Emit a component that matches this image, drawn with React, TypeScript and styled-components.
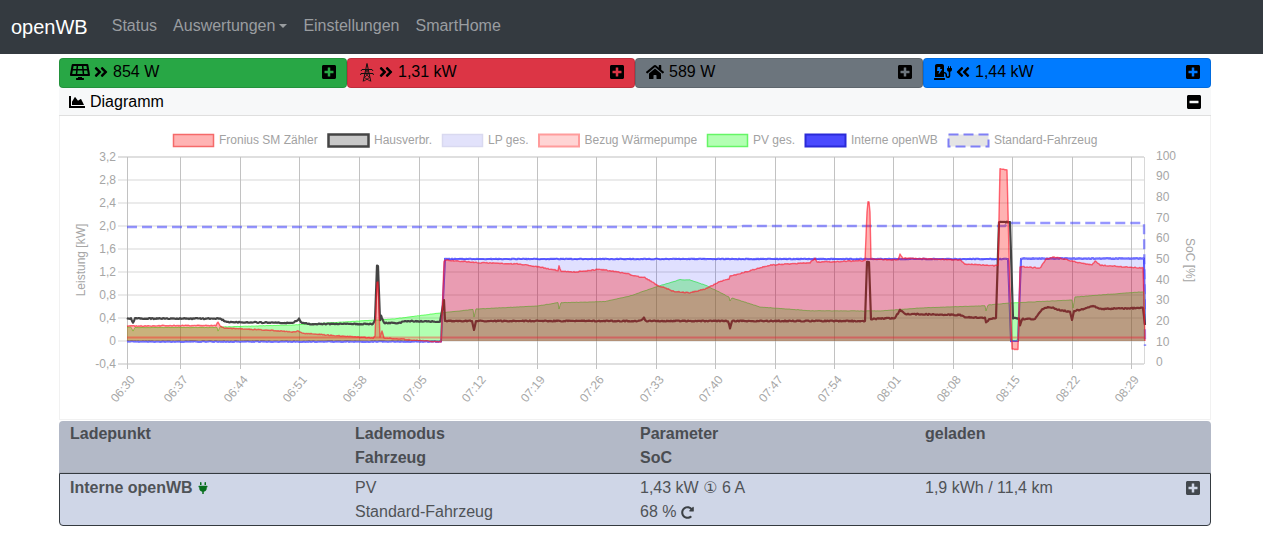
import { FC } from 'react';
import styled, { createGlobalStyle } from 'styled-components';
import {
  FaAngleDoubleLeft,
  FaAngleDoubleRight,
  FaChartArea,
  FaChargingStation,
  FaHome,
  FaMinusSquare,
  FaPlug,
  FaPlusSquare,
  FaRedoAlt,
  FaSolarPanel,
} from 'react-icons/fa';

const GlobalStyle = createGlobalStyle`
  html, body {
    margin: 0;
    background: #fff;
    font-family: "Liberation Sans", Arial, "DejaVu Sans", sans-serif;
    font-size: 16px;
    line-height: 24px;
  }
`;

const Navbar = styled.nav`
  display: flex;
  align-items: center;
  height: 54px;
  padding-left: 11px;
  background: #343a40;
`;

const Brand = styled.a`
  margin-right: 24px;
  font-size: 20px;
  color: #fff;
`;

const NavList = styled.ul`
  display: flex;
  gap: 16px;
  margin: 0 0 2px;
  padding: 0;
  list-style: none;
`;

const NavItem = styled.li`
  display: flex;
  align-items: center;
  color: #9a9da0;
`;

const Caret = styled.span`
  width: 0;
  height: 0;
  margin: 0 0 0 4px;
  border-top: 4.8px solid #9a9da0;
  border-left: 4.8px solid transparent;
  border-right: 4.8px solid transparent;
`;

const Main = styled.main`
  width: 1152px;
  margin: 4px 0 0 59px;
`;

const Tiles = styled.div`
  display: grid;
  grid-template-columns: repeat(4, 288px);
`;

const Tile = styled.div<{ $bg: string }>`
  display: flex;
  align-items: center;
  justify-content: space-between;
  box-sizing: border-box;
  height: 30px;
  padding: 0 9px 2px 10px;
  border: 1px solid rgba(0, 0, 0, 0.125);
  border-radius: 4px;
  background: ${(p) => p.$bg};
  color: #000;
`;

const TileValue = styled.span`
  display: flex;
  align-items: center;
  gap: 3px;
  svg {
    display: block;
  }
`;

const TileText = styled.span`
  margin-left: 1px;
`;

const HomeSlot = styled.span`
  display: flex;
  margin-right: 1px;
`;

const PylonSlot = styled.span`
  display: flex;
  margin: 0 1px 0 2px;
`;

const ToggleIcon = styled(FaPlusSquare)`
  display: block;
`;

const DiagramHeader = styled.div`
  display: flex;
  align-items: center;
  justify-content: space-between;
  box-sizing: border-box;
  height: 28px;
  padding: 0 9px 0 10px;
  border-bottom: 1px solid #dfdfdf;
  background: #f7f8f9;
  color: #000;
`;

const DiagramTitle = styled.span`
  display: flex;
  align-items: center;
  gap: 5px;
`;

const ChartBody = styled.div`
  height: 304px;
  box-sizing: border-box;
  border: 1px solid #f1f1f1;
  border-top: 0;
  svg {
    display: block;
  }
`;

const TableHead = styled.div`
  display: grid;
  grid-template-columns: repeat(3, 285px) 276px;
  align-content: start;
  box-sizing: border-box;
  height: 52px;
  margin-top: 1px;
  padding: 1px 0 0 11px;
  border-radius: 4px 4px 0 0;
  border-bottom: 1px solid #a9aebb;
  background: #b3b9c7;
  color: #4a4d52;
  font-weight: bold;
`;

const TableRow = styled.div`
  display: grid;
  grid-template-columns: repeat(3, 285px) 276px;
  align-content: start;
  box-sizing: border-box;
  height: 53px;
  padding: 2px 0 0 10px;
  border: 1px solid #343a40;
  border-radius: 0 0 4px 4px;
  background: #cfd6e7;
  color: #4f5357;
`;

const Cell = styled.div`
  height: 24px;
`;

const NameCell = styled(Cell)`
  display: flex;
  align-items: center;
  gap: 4px;
  font-weight: bold;
`;

const FlexCell = styled(Cell)`
  display: flex;
  align-items: center;
  justify-content: space-between;
`;

const RowToggle = styled(FaPlusSquare)`
  display: block;
  color: #43484e;
`;

const InlineIcon = styled.span`
  display: inline-flex;
  vertical-align: -2px;
  color: #3c4146;
`;

const PlugIcon = styled.span`
  display: inline-flex;
  color: #076f1d;
`;

const AxisText = styled.text`
  font-family: "Liberation Sans", Arial, sans-serif;
  font-size: 12px;
  fill: #a6a6a6;
`;

const LegendText = styled.text`
  font-family: "Liberation Sans", Arial, sans-serif;
  font-size: 12px;
  fill: #a2a2a2;
`;

// pixel keypoints of each trace, read off the plot
type Key = [number, number];

const BASE = 341;

const fronius: Key[] = [
  [127, 326], [132, 325.5], [133, 326], [175, 325.5], [216, 325.5], [218, 322], [220, 325.5], [224, 328], [267, 330], [293, 332],
  [298, 331], [302, 333], [327, 335], [350, 336.5], [373, 338], [375, 336], [377, 282], [378, 282], [380, 337], [382, 331], [384, 338],
  [400, 339], [427, 341], [441, 342], [444, 262], [445, 260], [478, 262.7], [520, 264], [540, 267], [558, 270.5], [559, 266], [561, 271],
  [575, 272], [600, 269.3], [625, 273], [640, 277], [644, 277], [657, 285], [675, 291.7], [690, 292.7], [705, 289], [720, 281.7], [729, 279],
  [730, 276], [735, 275], [770, 265], [810, 262.7], [815, 258], [817, 262], [834, 261.7], [865, 260.5], [867, 212], [868, 202], [869, 202], [870, 212], [871, 259],
  [898, 260], [900, 254], [903, 258], [960, 260], [965, 264], [995, 265.7], [998, 265], [1000, 168.3], [1007, 170], [1009, 252], [1012, 349.3],
  [1018, 349.3], [1020, 266.7], [1040, 268], [1046, 259], [1054, 257], [1060, 258], [1080, 263], [1092, 265], [1095, 261], [1100, 265],
  [1120, 266.7], [1143, 268], [1144, 300], [1145, 341],
];

const house: Key[] = [
  [127, 318.5], [131, 318.5], [133, 323], [135, 318.5], [220, 318.7], [227, 322], [293, 323], [299, 319], [302, 323], [310, 324], [373, 324],
  [375, 320], [377, 266], [378, 266], [380, 320], [381, 316], [384, 323], [400, 323], [403, 321], [440, 321.7], [444, 300], [445, 321],
  [472, 321], [474, 330], [476, 321], [640, 321], [644, 318], [646, 321], [728, 321], [730, 328], [732, 321], [865, 321], [867, 262],
  [869, 262], [871, 319], [895, 318], [900, 310], [905, 314], [960, 315], [965, 317], [985, 318], [986, 322], [990, 319], [996, 318],
  [999, 222], [1010, 222], [1013, 318], [1019, 319], [1020, 326], [1022, 319], [1035, 319], [1042, 309], [1050, 307], [1060, 310], [1070, 312],
  [1072, 320], [1074, 311], [1085, 309], [1093, 306], [1100, 309], [1143, 308], [1145, 325],
];

const lp: Key[] = [
  [127, 341.5], [441, 341.5], [445, 259], [1005, 259], [1008, 259], [1011, 341], [1018, 341], [1021, 258.5], [1144, 258.5], [1145, 325],
];

const heatPump: Key[] = [[127, 337.5], [1145, 337.5]];

const pv: Key[] = [
  [127, 327], [131, 327], [133, 331], [135, 327.5], [217, 327.5], [218, 331], [220, 327], [293, 325], [393, 319], [440, 313], [478, 309],
  [473, 309.5], [474, 317], [476, 309], [537, 306], [558, 302.7], [559, 309], [561, 302.7], [590, 302], [605, 301.5], [630, 296], [657, 286.6],
  [680, 279.7], [690, 280], [705, 285], [729, 297], [730, 301], [732, 298], [760, 307], [810, 310.7], [880, 311], [920, 308], [985, 305.7],
  [986, 311], [988, 305], [1010, 303], [1072, 300], [1073, 308], [1075, 297], [1100, 295], [1144, 291.7], [1145, 320],
];

const standard: Key[] = [
  [127, 227], [739, 227], [743, 226], [1005, 226], [1007, 223], [1144, 223], [1145, 346],
];

const wobble = (x: number, seed: number) => {
  const v = Math.sin(x * 12.9898 + seed * 78.233) * 43758.5453;
  return (v - Math.floor(v)) * 2 - 1;
};

const tracePoints = (keys: Key[], amp: number, seed: number) => {
  const sorted = [...keys].sort((a, b) => a[0] - b[0]);
  const pts: Key[] = [];
  for (let i = 0; i < sorted.length - 1; i++) {
    const [x0, y0] = sorted[i];
    const [x1, y1] = sorted[i + 1];
    const steep = Math.abs(y1 - y0) > 8 && x1 - x0 < 6;
    const steps = Math.max(1, Math.round(x1 - x0));
    for (let s = 0; s < steps; s++) {
      const x = x0 + ((x1 - x0) * s) / steps;
      const y = y0 + ((y1 - y0) * s) / steps;
      pts.push([x, y + (steep ? 0 : wobble(x, seed) * amp)]);
    }
  }
  pts.push(sorted[sorted.length - 1]);
  return pts;
};

const linePath = (pts: Key[]) => pts.map(([x, y], i) => `${i ? 'L' : 'M'}${x.toFixed(1)} ${y.toFixed(1)}`).join('');

const areaPath = (pts: Key[]) =>
  `${linePath(pts)}L${pts[pts.length - 1][0]} ${BASE}L${pts[0][0]} ${BASE}Z`;

type Series = {
  keys: Key[];
  amp: number;
  stroke: string;
  width: number;
  fill?: string;
  dash?: string;
};

// first entry is painted first, so the last one ends up on top of the others
const series: Series[] = [
  { keys: standard, amp: 0, stroke: 'rgba(64,64,255,0.55)', width: 2.4, dash: '10 5' },
  { keys: lp, amp: 0.35, stroke: 'rgba(40,40,255,0.85)', width: 2 },
  { keys: pv, amp: 0.2, stroke: 'rgba(60,255,60,0.75)', width: 1, fill: 'rgba(0,255,0,0.3)' },
  { keys: heatPump, amp: 0, stroke: 'rgba(255,60,60,0.45)', width: 2, fill: 'rgba(255,0,0,0.02)' },
  { keys: lp, amp: 0.3, stroke: 'rgba(200,200,255,0.35)', width: 1, fill: 'rgba(0,0,255,0.12)' },
  { keys: house, amp: 0.55, stroke: '#444', width: 2.2 },
  { keys: fronius, amp: 0.45, stroke: 'rgba(255,20,40,0.62)', width: 1.4, fill: 'rgba(255,0,0,0.3)' },
];

const timeTicks: [number, string][] = [
  [127.5, '06:30'], [180.5, '06:37'], [240.5, '06:44'], [299.5, '06:51'], [359.5, '06:58'], [419.5, '07:05'],
  [478.5, '07:12'], [537.5, '07:19'], [596.5, '07:26'], [656.5, '07:33'], [715.5, '07:40'], [775.5, '07:47'],
  [834.5, '07:54'], [893.5, '08:01'], [953.5, '08:08'], [1012.5, '08:15'], [1072.5, '08:22'], [1131.5, '08:29'],
];

const kwLabels = ['3,2', '2,8', '2,4', '2,0', '1,6', '1,2', '0,8', '0,4', '0', '-0,4'];
const socLabels = ['100', '90', '80', '70', '60', '50', '40', '30', '20', '10', '0'];

type LegendEntry = { x: number; label: string; fill: string; stroke: string; width: number; dash?: string };

const legend: LegendEntry[] = [
  { x: 173, label: 'Fronius SM Zähler', fill: '#ffb3b3', stroke: '#f56a6a', width: 1.5 },
  { x: 328, label: 'Hausverbr.', fill: '#c8c8c8', stroke: '#444', width: 2.5 },
  { x: 442, label: 'LP ges.', fill: '#e2e2fb', stroke: '#d9d9f0', width: 1.5 },
  { x: 538.5, label: 'Bezug Wärmepumpe', fill: '#ffd4d4', stroke: '#ff9c9c', width: 2 },
  { x: 707, label: 'PV ges.', fill: '#b2ffb2', stroke: '#66f566', width: 1.5 },
  { x: 805, label: 'Interne openWB', fill: '#4a4aff', stroke: '#2a2ad8', width: 2 },
  { x: 948, label: 'Standard-Fahrzeug', fill: '#e4e4e4', stroke: '#7f7ff5', width: 2, dash: '10 5' },
];

const PowerChart: FC = () => (
  <svg width={1150} height={303} viewBox="60 116 1150 303">
    {legend.map((l) => (
      <g key={l.label}>
        <rect x={l.x + 0.5} y={134.5} width={40} height={12} fill={l.fill} stroke={l.stroke} strokeWidth={l.width} strokeDasharray={l.dash} />
        <LegendText x={l.x + 46} y={144}>{l.label}</LegendText>
      </g>
    ))}

    {kwLabels.map((label, i) => {
      const y = 157 + i * 23;
      return (
        <g key={label}>
          <line x1={118} x2={1144} y1={y} y2={y} stroke={i === 0 || i === 9 ? '#d4d4d4' : '#e4e4e4'} strokeWidth={1.5} />
          <AxisText x={116} y={y + 4} textAnchor="end">{label}</AxisText>
        </g>
      );
    })}
    {socLabels.map((label, i) => (
      <AxisText key={label} x={1156} y={159.7 + i * 20.65}>{label}</AxisText>
    ))}
    {timeTicks.map(([x, label]) => (
      <g key={label}>
        <line x1={x} x2={x} y1={157} y2={369} stroke="#c2c2c2" />
        <AxisText transform={`translate(${x + 8} 380) rotate(-50)`} textAnchor="end">{label}</AxisText>
      </g>
    ))}
    <line x1={1144.5} x2={1144.5} y1={157} y2={364} stroke="#d8d8d8" />
    <AxisText transform="translate(85 260) rotate(-90)" textAnchor="middle">Leistung [kW]</AxisText>
    <AxisText transform="translate(1186 260) rotate(90)" textAnchor="middle">SoC [%]</AxisText>

    {series.map((s, i) => {
      const pts = tracePoints(s.keys, s.amp, i + 1);
      return (
        <g key={i}>
          {s.fill && <path d={areaPath(pts)} fill={s.fill} />}
          <path d={linePath(pts)} fill="none" stroke={s.stroke} strokeWidth={s.width} strokeDasharray={s.dash} strokeLinejoin="round" />
        </g>
      );
    })}
  </svg>
);

const PylonIcon: FC = () => (
  <svg width={14} height={19} viewBox="0 0 14 19" fill="none" stroke="#111" strokeWidth={1}>
    <path d="M7 0.5L3.2 18.5M7 0.5L10.8 18.5" />
    <path d="M2 6.5L1 8M2 6.5H12L13 8M1 10.5H13M1 10.5L0.5 12M13 10.5L13.5 12" />
    <path d="M5.6 6.5L8.8 10.5L4.4 14.5L10 18M8.4 6.5L5.2 10.5L9.6 14.5L4 18" strokeWidth={0.8} />
  </svg>
);

const App: FC = () => {
  return (
    <>
      <GlobalStyle />
      <Navbar>
        <Brand>openWB</Brand>
        <NavList>
          <NavItem>Status</NavItem>
          <NavItem>Auswertungen<Caret /></NavItem>
          <NavItem>Einstellungen</NavItem>
          <NavItem>SmartHome</NavItem>
        </NavList>
      </Navbar>
      <Main>
        <Tiles>
          <Tile $bg="#28a745">
            <TileValue><FaSolarPanel size={20} /><FaAngleDoubleRight size={16} /><TileText>854 W</TileText></TileValue>
            <ToggleIcon size={16} />
          </Tile>
          <Tile $bg="#dc3545">
            <TileValue><PylonSlot><PylonIcon /></PylonSlot><FaAngleDoubleRight size={16} /><TileText>1,31 kW</TileText></TileValue>
            <ToggleIcon size={16} />
          </Tile>
          <Tile $bg="#6c757d">
            <TileValue><HomeSlot><FaHome size={18} /></HomeSlot><TileText>589 W</TileText></TileValue>
            <ToggleIcon size={16} />
          </Tile>
          <Tile $bg="#007bff">
            <TileValue><FaChargingStation size={18} /><FaAngleDoubleLeft size={16} /><TileText>1,44 kW</TileText></TileValue>
            <ToggleIcon size={16} />
          </Tile>
        </Tiles>
        <DiagramHeader>
          <DiagramTitle><FaChartArea size={16} />Diagramm</DiagramTitle>
          <FaMinusSquare size={16} />
        </DiagramHeader>
        <ChartBody>
          <PowerChart />
        </ChartBody>
        <TableHead>
          <Cell>Ladepunkt</Cell>
          <Cell>Lademodus</Cell>
          <Cell>Parameter</Cell>
          <Cell>geladen</Cell>
          <Cell />
          <Cell>Fahrzeug</Cell>
          <Cell>SoC</Cell>
          <Cell />
        </TableHead>
        <TableRow>
          <NameCell>Interne openWB <PlugIcon><FaPlug size={12} /></PlugIcon></NameCell>
          <Cell>PV</Cell>
          <Cell>1,43 kW ① 6 A</Cell>
          <FlexCell>1,9 kWh / 11,4 km<RowToggle size={16} /></FlexCell>
          <Cell />
          <Cell>Standard-Fahrzeug</Cell>
          <Cell>68 % <InlineIcon><FaRedoAlt size={13} /></InlineIcon></Cell>
          <Cell />
        </TableRow>
      </Main>
    </>
  );
};

export default App;
